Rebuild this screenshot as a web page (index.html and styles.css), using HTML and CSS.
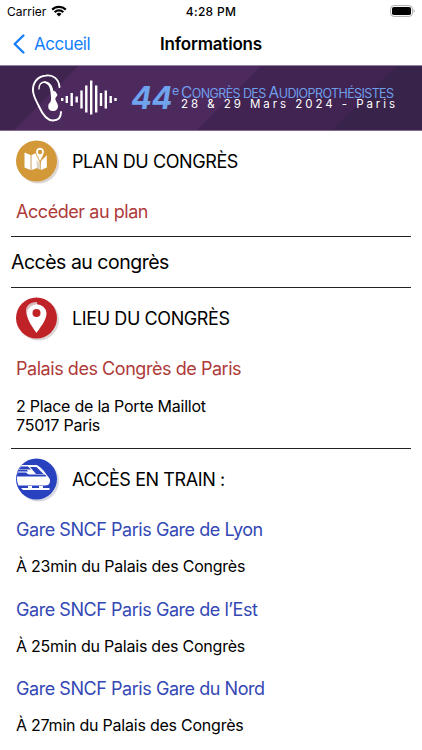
FILE: index.html
```
<!DOCTYPE html>
<html lang="fr">
<head>
  <meta charset="UTF-8">
  <meta name="viewport" content="width=device-width, initial-scale=1.0">
  <title>Informations</title>
  <link rel="stylesheet" href="styles.css">
</head>
<body>

<div class="status">
  <div class="carrier">
    <span>Carrier</span>
    <svg width="16" height="12" viewBox="0 0 16 12" fill="none" stroke="#000" stroke-width="2.2">
      <path d="M1.2 4.6a9.7 9.7 0 0 1 13.6 0M3.7 7.2a6.1 6.1 0 0 1 8.6 0"/>
      <path d="M8 11.4L5.5 8.9a3.6 3.6 0 0 1 5 0z" fill="#000" stroke="none"/>
    </svg>
  </div>
  <span class="time">4:28 PM</span>
  <svg class="battery" width="25" height="12" viewBox="0 0 25 12">
    <rect x=".6" y=".6" width="21.8" height="10.8" rx="3.2" fill="#fff" stroke="#aaa"/>
    <rect x="2" y="2" width="19" height="8" rx="1.8"/>
    <path d="M23.6 4.3v3.4q1-.5 1-1.7t-1-1.7z" fill="#999"/>
  </svg>
</div>

<div class="nav">
  <a class="back" href="#">
    <svg width="12" height="20" viewBox="0 0 12 20" fill="none" stroke="#147efb" stroke-width="2.4" stroke-linecap="round" stroke-linejoin="round"><path d="M10.4 1.5L1.7 10l8.7 8.5"/></svg>
    <span>Accueil</span>
  </a>
  <h1>Informations</h1>
</div>

<div class="banner">
  <svg class="ear" width="88" height="50" viewBox="0 0 88 50">
    <g fill="none" stroke="#fff" stroke-linecap="round">
      <path stroke-width="1.900" d="M28.500 14C28 6 22 1.500 15 2.500 6 3.500 1.500 10 2 18c.5 6 3.500 10 6 15.500 4 9 8 14 14 14 5 0 8-3 8-8.500"/>
      <path stroke-width="1.300" d="M8 16c0-5 3-7 6-7"/>
    </g>
    <path fill="#fff" d="M13 8.300c5-.3 8.500 3.700 9.500 9.700l2 .5 2 3.500-2 3c-1 2 2.500 5 2.500 8 0 4-3 5.500-6 5-5-1-4.500-7-1.500-9 1-3 .5-6 0-10-.5-5-2.500-8.500-6.500-9z"/>
    <path stroke="#fff" stroke-width="2.400" d="M31.200 25v3M35.800 23v7M40.700 20v13M45.700 23.500v6M50.500 17.500v18M55.300 12.500v27M60.200 7.500v34M65.200 12.500v27M70 20v13M74.800 17.500v18M79.700 23v7M84.500 25v3"/>
  </svg>
  <span class="num">44</span>
  <div class="event">
    <div class="event-name"><span class="sup">e</span><span class="cap">C</span>ONGRÈS DES <span class="cap">A</span>UDIOPROTHÉSISTES</div>
    <div class="event-date">28 &amp; 29 Mars 2024 - Paris</div>
  </div>
</div>

<div class="content">
  <section>
    <div class="title">
      <svg width="46" height="46" viewBox="0 0 46 46">
        <circle cx="22.500" cy="23" r="20.500" fill="#ddd5d1"/>
        <circle cx="20.500" cy="21" r="20.500" fill="#d39837"/>
        <path fill="#fff" d="M8.500 12.500l6 2.500v15l-6-2.500zM15.700 15l4.500-2 3.500 8v6l-8 3zM25 21l5-5 .8-1v12.500L25 30z"/>
        <path fill="#e1d5c3" d="M14.500 15h1.200v15h-1.200zM20.700 20l3.800 3.500v6.500l-3.800-2z"/>
        <path fill="#fff" stroke="#d39837" stroke-width=".8" d="M24 22l-3.400-7c-4.500-10 11.300-10 6.800 0z"/>
        <circle cx="24" cy="12" r="2.200" fill="#d39837"/>
      </svg>
      <h2>PLAN DU CONGRÈS</h2>
    </div>
    <a class="link red" href="#">Accéder au plan</a>
  </section>

  <h2 class="access">Accès au congrès</h2>

  <section>
    <div class="title">
      <svg width="46" height="46" viewBox="0 0 46 46">
        <circle cx="22.500" cy="23" r="20.500" fill="#ddd8d8"/>
        <circle cx="20.500" cy="21" r="20.500" fill="#bf2328"/>
        <path fill="#d9b9b9" d="M19.500 34.500L12 21C6.500 10 13 5 21 5l2 28z"/>
        <path fill="#fff" d="M20.500 36c-3-5-9.500-12-9.500-20a9.800 9.800 0 0 1 19.500 0C30.500 24 23.500 31 20.500 36z"/>
        <circle cx="20.500" cy="16" r="4" fill="#bf2328"/>
      </svg>
      <h2>LIEU DU CONGRÈS</h2>
    </div>
    <a class="link red" href="#">Palais des Congrès de Paris</a>
    <p class="address">2 Place de la Porte Maillot<br>75017 Paris</p>
  </section>

  <section>
    <div class="title">
      <svg width="46" height="46" viewBox="0 0 46 46">
        <circle cx="22.500" cy="23" r="20.500" fill="#d7d8e2"/>
        <circle cx="20.500" cy="21" r="20.500" fill="#2841bf"/>
        <path fill="#fff" d="M5.500 7H20.500c3 1 8 6 11 11 2 2 3 4 2.500 5.500-.5 3-2 4-5 4H2.500C1 24 .8 21 1 18.500h29.500l-1.500-2H1.500l.5-3h10L11 12H3z"/>
        <path fill="#2841bf" d="M14 9h6.500l7 7H20zM5 8.500H12l3 3H3.500zM2 14.500h8l3 2.500H1.500z"/>
        <path fill="#fff" d="M12 28h4v2h-4zM23 28h4v2h-4zM5 30h28.500v2H7z"/>
      </svg>
      <h2>ACCÈS EN TRAIN :</h2>
    </div>
    <a class="link blue" href="#">Gare SNCF Paris Gare de Lyon</a>
    <p>À 23min du Palais des Congrès</p>
    <a class="link blue" href="#">Gare SNCF Paris Gare de l’Est</a>
    <p>À 25min du Palais des Congrès</p>
    <a class="link blue" href="#">Gare SNCF Paris Gare du Nord</a>
    <p>À 27min du Palais des Congrès</p>
  </section>
</div>

</body>
</html>
```
FILE: styles.css
```
* { box-sizing: border-box; }
body { margin: 0; height: 750px; overflow: hidden; background: #fff; color: #000; font-family: Inter, "Liberation Sans", sans-serif; }
svg { display: block; flex: none; }
h1, h2, p { margin: 0; font-weight: 400; }
a { text-decoration: none; }

.status { display: grid; grid-template-columns: 1fr auto 1fr; align-items: center; height: 22px; padding: 0 7px; font-size: 12px; }
.carrier { display: flex; align-items: center; gap: 5px; }
.time { font-weight: 500; letter-spacing: 0.3px; }
.battery { justify-self: end; }

.nav { display: grid; grid-template-columns: 1fr auto 1fr; align-items: center; height: 43px; padding: 0 13px; }
.back { display: flex; align-items: center; gap: 9px; color: #147efb; font-size: 17px; letter-spacing: -0.45px; }
.nav h1 { font-size: 17px; font-weight: 600; letter-spacing: -0.2px; }

.banner {
  display: flex;
  height: 66px;
  padding-left: 31px;
  overflow: hidden;
  white-space: nowrap;
  border-top: 1px solid #9583a0;
  border-bottom: 1px solid #85698f;
  background: linear-gradient(135deg, #3f2450 16%, #4d2a5d 16.2%, #4d2a5d 53.6%, #412451 53.8%, #412451 81.5%, #38244a 81.7%);
}
.ear { margin-top: 7px; }
.num { width: 41px; margin-left: 12px; color: #70a3ee; font-size: 31px; line-height: 64px; font-weight: 700; font-style: italic; letter-spacing: -0.5px; }
.event { padding-top: 19px; }
.event-name { height: 13px; line-height: 14px; color: #6f9eeb; font-size: 12.5px; letter-spacing: -0.6px; }
.sup { display: inline-block; width: 9px; transform: translateY(-3px); }
.cap { font-size: 15.5px; line-height: 1; }
.event-date { padding-left: 9px; color: #fff; font-size: 11.5px; line-height: 13px; letter-spacing: 2.95px; }

.content { padding: 0 11px; }
section { padding: 10px 5px 0; }
.title { display: flex; align-items: center; gap: 10px; height: 44px; }
.title h2 { font-size: 18px; letter-spacing: -0.4px; line-height: 40px; padding-bottom: 2px; }
.link { display: block; margin-top: 15px; font-size: 18px; line-height: 24px; letter-spacing: -0.45px; }
.red { color: #ae3a39; }
.blue { color: #3347b5; }
.access { height: 52px; line-height: 51px; font-size: 19.5px; letter-spacing: -0.5px; border-top: 1px solid #222; border-bottom: 1px solid #222; }
section:first-child { height: 105px; }
section p { margin-top: 15px; font-size: 16px; line-height: 19px; letter-spacing: -0.23px; }
section .address { height: 51px; margin-top: 16px; }
p + .link { margin-top: 21.5px; }
section:last-child { border-top: 1px solid #222; }
```
